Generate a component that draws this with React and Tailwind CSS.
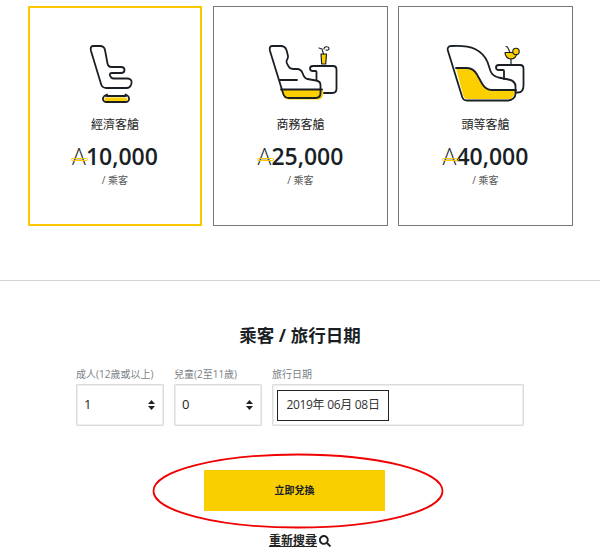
import { FaSearch } from "react-icons/fa";

const font = { cjk: "font-['Open_Sans','Noto_Sans_CJK_TC',sans-serif]" };

const EconomySeat = () => (
  <svg width="60" height="75" viewBox="0 0 60 75" fill="none" stroke="#1a1f26" strokeWidth="1.800" strokeLinecap="round" strokeLinejoin="round">
    <path d="M25 62.500h20c2.500 0 3 3 1 4.500h-20c-2-1.500-1.500-3.500-1-4.500z" fill="#fcd000" stroke="none" />
    <path d="M27 59.500c-2 .5-3.500 2-4 3.500-.5 2 1 4 3 4h20c2 0 3.500-2 3-4-.3-1.500-2-3-3.500-3.500" />
    <path d="M26 61h20" />
    <path d="M13 11h7c3 0 4.500 1.500 5 4l2.500 13.500c.5 2.500 1.500 3.500 4 3.500h9.500c2.500 0 3.500 1.500 3.500 3s-1 3-3.500 3h-9c-2 0-2.500 1-2 2.500.5 1.500 1.500 3 3.500 3h14c3 0 4.500 2 4 4.500l-.5 2c-.7 2-2 3-4.500 3h-20c-3 0-4.500-1-5.300-3.500L11 16c-.8-3 0-5 2-5z" />
  </svg>
);

const BusinessSeat = () => (
  <svg width="85" height="75" viewBox="0 0 85 75" fill="none" stroke="#1a1f26" strokeWidth="1.800" strokeLinecap="round" strokeLinejoin="round">
    <path d="M21 55h40c2 0 2.500 1 2.200 3l-.7 3.500c-.5 2-2 3-4 3H29c-3 0-4.500-1-5.200-3.500z" fill="#fcd000" stroke="none" />
    <path d="M12 11h9c3 0 4.500 1.500 5.500 4l1.500 6c.5 2-1 3-1.500 5-.5 2 1 3.500 2.500 6 1 1.800 2.500 2 5 2h3c3 0 4.500 1.500 5.500 4 1 3 2 5.500 5 6l8.500 1.500c3 .5 4.500 2 4.500 4.500v8c0 3-2 5-5 5H29c-3 0-5-1.500-5.700-4L10 16c-.8-3 0-5 2-5z" />
    <path d="M20 45h17" />
    <path d="M21 54.500h41" />
    <path d="M66 31H53c-2 0-3 1-3 2.500s1 2.500 3 2.500h2.500c1 0 1 .5 1 1v8" />
    <path d="M66 31h7c2.500 0 3.500 1 3.500 3.500v19c0 3-1.500 4.500-4 4.500H64" />
    <path d="M61 19h5.500l-.8 10h-4z" fill="#fcd000" strokeWidth="1.200" />
    <path d="M63.500 19l-1.500-5-3-1" strokeWidth="1.100" />
    <path d="M64 14c0-3 5-3 5-.5 0 1.500-2 2-3 1.500" strokeWidth="1.100" />
  </svg>
);

const FirstSeat = () => (
  <svg width="85" height="75" viewBox="0 0 85 75" fill="none" stroke="#1a1f26" strokeWidth="1.800" strokeLinecap="round" strokeLinejoin="round">
    <path d="M16 33h11c5 0 7.500 2 10 6.500l5 9c2.500 4.500 5 6.500 10 6.500h22c1.500 0 1.500 1 1 2.500-1 4-3 6.500-6.500 6.500H28c-2.500 0-4-1-4.800-3.500z" fill="#fcd000" stroke="none" />
    <path d="M11 11c10-.5 18 0 24 3 6 3 10 7 12.500 13l3 9c1.500 4 4 5.500 8 6.500l10 2c3.500.7 7 2.500 7 7v7.500c0 3-3 6.500-8 6.500H27c-2.500 0-4-1-4.800-3.500L8 16c-1-3 .5-5 3-5z" />
    <path d="M16 33h11c5 0 7.500 2 10 6.500l5 9c2.500 4.500 5 6.500 10 6.500h24" />
    <path d="M80 30H59c-2 0-3 1-3 2.500s1 2.500 3 2.500h4c.5 0 1 .5 1 1v8" />
    <path d="M80 30c2.500 0 3.500 1.500 3.500 3.500v17c0 5-2 7-5.500 7h-2" />
    <path d="M65 17.500h12c0 4-3 6.500-6 6.500s-6-2.500-6-6.500z" fill="#fcd000" strokeWidth="1.200" />
    <path d="M71 24v6M67.500 29.500h7" strokeWidth="1.200" />
    <path d="M70 17.500l-2.500-5.500-1.500-.5" strokeWidth="1.100" />
    <circle cx="76" cy="16.500" r="3.200" fill="#fcd000" strokeWidth="1.100" />
  </svg>
);

const CABINS = [
  { name: "經濟客艙", price: "10,000", Icon: EconomySeat, iconClass: "mr-[10px]", active: true },
  { name: "商務客艙", price: "25,000", Icon: BusinessSeat, iconClass: "ml-[4px]" },
  { name: "頭等客艙", price: "40,000", Icon: FirstSeat, iconClass: "mr-[6px]" },
];

const Arrows = () => (
  <svg width="7" height="10" viewBox="0 0 7 10" fill="#222">
    <path d="M3.500 0L7 4H0zM3.500 10L0 6h7z" />
  </svg>
);

const CabinCard = ({ name, price, Icon, iconClass, active }) => (
  <div
    className={`flex h-[220px] flex-col items-center bg-white ${
      active ? "w-[174px] border-2 border-[#fcc800]" : "w-[175px] border border-[#777]"
    }`}
  >
    <div className={`flex h-[72px] items-end ${iconClass} ${active ? "mt-[30px]" : "mt-[31px]"}`}>
      <Icon />
    </div>
    <div className="mt-[6px] text-[12px] leading-[18px] text-[#222]">{name}</div>
    <div className="mt-[7px] flex items-center text-[23px] leading-[30px] font-semibold text-[#1a1f26]">
      <span className="relative font-light">
        A
        <span className="absolute top-[17px] left-[-1px] h-[3px] w-[17px] rounded-full border border-[#fcc800]" />
      </span>
      {price}
    </div>
    <div className="mt-[2px] text-[10px] leading-[14px] text-[#555]">/ 乘客</div>
  </div>
);

const SelectBox = ({ label, value, width }) => (
  <div className={width}>
    <div className="mb-[3px] text-[10px] leading-[14px] whitespace-nowrap text-[#7a7f87]">{label}</div>
    <div className="flex h-[42px] items-center justify-between rounded-[1px] border border-[#dcdcdc] pr-[8px] pl-[7px] text-[13px] text-[#222] shadow-[inset_0_0_0_1px_#eeeeee]">
      {value}
      <Arrows />
    </div>
  </div>
);

export default function App() {
  return (
    <div className={`h-[555px] w-[600px] overflow-hidden bg-white ${font.cjk}`}>
      <div className="flex pt-[6px] pl-[28px]">
        <CabinCard {...CABINS[0]} />
        <div className="ml-[11px]">
          <CabinCard {...CABINS[1]} />
        </div>
        <div className="ml-[10px]">
          <CabinCard {...CABINS[2]} />
        </div>
      </div>

      <div className="mt-[54px] border-t border-[#d4d4d4]" />

      <h2 className="mt-[42px] text-center text-[17.500px] leading-[24px] font-bold text-[#1a1f26]">乘客 / 旅行日期</h2>

      <div className="mt-[20px] flex gap-[10px] pl-[76px]">
        <SelectBox label="成人(12歲或以上)" value="1" width="w-[88px]" />
        <SelectBox label="兒童(2至11歲)" value="0" width="w-[88px]" />
        <div className="w-[252px]">
          <div className="mb-[3px] text-[10px] leading-[14px] text-[#7a7f87]">旅行日期</div>
          <div className="flex h-[42px] items-center rounded-[1px] border border-[#dcdcdc] pl-[4px] shadow-[inset_0_0_0_1px_#eeeeee]">
            <div className="flex h-[31px] w-[112px] items-center justify-center border border-[#222] text-[12px] tracking-[-0.3px] text-[#333]">
              2019年 06月 08日
            </div>
          </div>
        </div>
      </div>

      <div className="relative mt-[44px] flex flex-col items-center">
        <button className="mr-[11px] h-[41px] w-[181px] bg-[#f9cf00] text-[10px] font-bold text-[#1a1f26]">立即兌換</button>
        {/* red annotation drawn over the button */}
        <svg className="absolute top-[-17px] left-[152px]" width="292" height="76" viewBox="0 0 292 76" fill="none">
          <ellipse cx="146" cy="38" rx="144.500" ry="36.500" stroke="#f00000" strokeWidth="1.800" />
        </svg>
        <a className="mt-[21px] flex items-center gap-[1px] text-[12px] leading-[18px] font-semibold text-[#222]">
          <span className="underline">重新搜尋 </span>
          <FaSearch className="ml-[1px] h-[12px] w-[12px]" />
        </a>
      </div>
    </div>
  );
}
